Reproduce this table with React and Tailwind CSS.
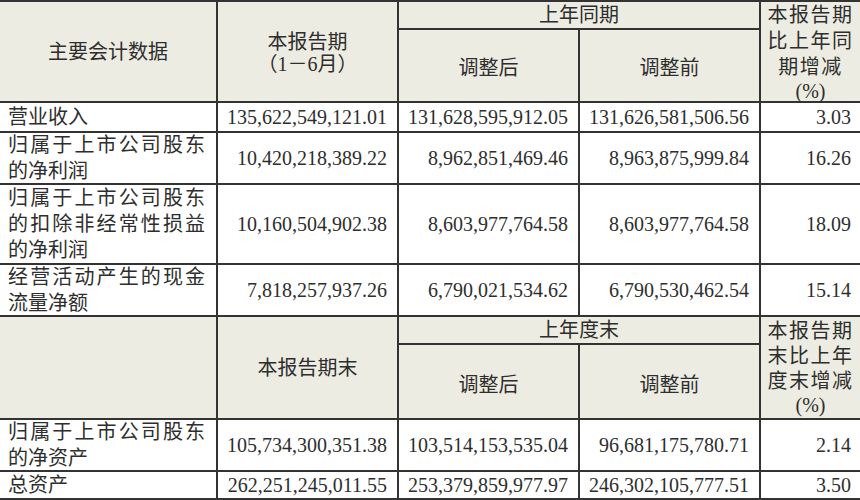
import React from 'react';

const HEAD = 'bg-[#edece2]';
const BODY = 'bg-white';

const rows = [
  {
    r: 'row-start-3',
    label: [['营业收入']],
    vals: ['135,622,549,121.01', '131,628,595,912.05', '131,626,581,506.56', '3.03'],
  },
  {
    r: 'row-start-4',
    label: [['归属于上市公司股东', true], ['的净利润']],
    vals: ['10,420,218,389.22', '8,962,851,469.46', '8,963,875,999.84', '16.26'],
  },
  {
    r: 'row-start-5',
    label: [['归属于上市公司股东', true], ['的扣除非经常性损益', true], ['的净利润']],
    vals: ['10,160,504,902.38', '8,603,977,764.58', '8,603,977,764.58', '18.09'],
  },
  {
    r: 'row-start-6',
    label: [['经营活动产生的现金', true], ['流量净额']],
    vals: ['7,818,257,937.26', '6,790,021,534.62', '6,790,530,462.54', '15.14'],
  },
  {
    r: 'row-start-9',
    label: [['归属于上市公司股东', true], ['的净资产']],
    vals: ['105,734,300,351.38', '103,514,153,535.04', '96,681,175,780.71', '2.14'],
  },
  {
    r: 'row-start-10',
    label: [['总资产']],
    vals: ['262,251,245,011.55', '253,379,859,977.97', '246,302,105,777.51', '3.50'],
  },
];

const valCols = ['col-start-2', 'col-start-3', 'col-start-4', 'col-start-5'];

function Label({ lines }) {
  return (
    <div className="flex-1 flex flex-col justify-center pl-[8px] pr-[11px] leading-[26px]">
      {lines.map(([text, spread], i) =>
        spread ? (
          <div key={i} className="flex justify-between">
            {text.split('').map((ch, j) => (
              <span key={j}>{ch}</span>
            ))}
          </div>
        ) : (
          <div key={i}>{text}</div>
        )
      )}
    </div>
  );
}

function Center({ className = '', children }) {
  return (
    <div className={`flex flex-col items-center justify-center text-center ${className}`}>
      {children}
    </div>
  );
}

export default function App() {
  return (
    <div className="w-[860px] h-[500px] bg-white text-[#2e2e2e] text-[20px] font-['Liberation_Serif','Noto_Sans_CJK_SC',serif]">
      <div className="grid grid-cols-[216px_179px_179px_179px_99px] grid-rows-[26px_71px_28px_50px_78px_50px_26px_73px_50px_26px] gap-[2px] bg-[#333] border-t-2 border-b-2 border-[#333]">
        {/* first header */}
        <Center className={`${HEAD} col-start-1 row-start-1 row-span-2`}>主要会计数据</Center>
        <Center className={`${HEAD} col-start-2 row-start-1 row-span-2 leading-[22px] pt-[2px]`}>
          <div>本报告期</div>
          <div>（1－6月）</div>
        </Center>
        <Center className={`${HEAD} col-start-3 col-span-2 row-start-1`}>上年同期</Center>
        <Center className={`${HEAD} col-start-3 row-start-2 pt-[4px]`}>调整后</Center>
        <Center className={`${HEAD} col-start-4 row-start-2 pt-[4px]`}>调整前</Center>
        <Center className={`${HEAD} col-start-5 row-start-1 row-span-2 leading-[26px] tracking-[1.5px]`}>
          <div>本报告期</div>
          <div>比上年同</div>
          <div>期增减</div>
          <div className="tracking-normal leading-[22px]">(%)</div>
        </Center>

        {/* second header */}
        <div className={`${HEAD} col-start-1 row-start-7 row-span-2`} />
        <Center className={`${HEAD} col-start-2 row-start-7 row-span-2`}>本报告期末</Center>
        <Center className={`${HEAD} col-start-3 col-span-2 row-start-7`}>上年度末</Center>
        <Center className={`${HEAD} col-start-3 row-start-8 pt-[6px]`}>调整后</Center>
        <Center className={`${HEAD} col-start-4 row-start-8 pt-[6px]`}>调整前</Center>
        <Center className={`${HEAD} col-start-5 row-start-7 row-span-2 leading-[25px] tracking-[1.5px]`}>
          <div>本报告期</div>
          <div>末比上年</div>
          <div>度末增减</div>
          <div className="tracking-normal leading-[22px]">(%)</div>
        </Center>

        {/* data rows */}
        {rows.map((row) => (
          <React.Fragment key={row.r}>
            <div className={`${BODY} col-start-1 ${row.r} flex`}>
              <Label lines={row.label} />
            </div>
            {row.vals.map((v, i) => (
              <div
                key={i}
                className={`${BODY} ${valCols[i]} ${row.r} flex items-center justify-end ${i === 3 ? 'pr-[9px]' : 'pr-[10px]'}`}
              >
                {v}
              </div>
            ))}
          </React.Fragment>
        ))}
      </div>
    </div>
  );
}
